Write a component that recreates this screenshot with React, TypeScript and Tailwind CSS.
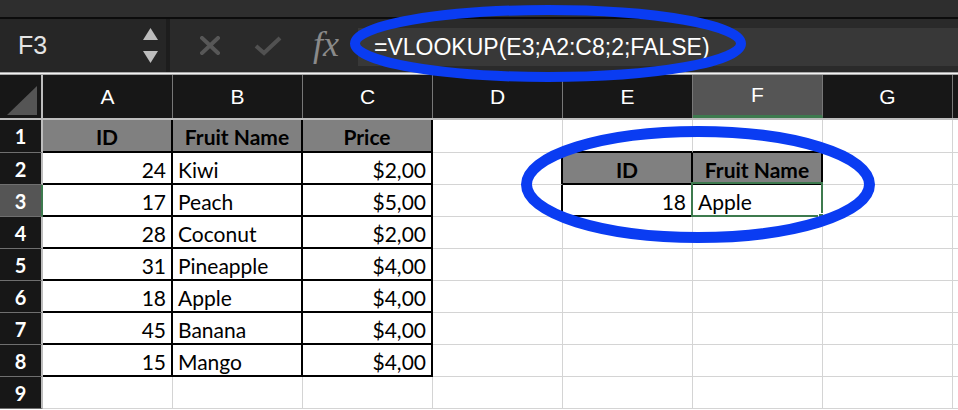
import React from "react";

type Cell = {
  text?: string;
  align?: "l" | "r" | "c";
  head?: boolean;
  br?: boolean; // black right border
  bb?: boolean; // black bottom border
  sel?: boolean;
};

const fruits: [string, string, string][] = [
  ["24", "Kiwi", "$2,00"],
  ["17", "Peach", "$5,00"],
  ["28", "Coconut", "$2,00"],
  ["31", "Pineapple", "$4,00"],
  ["18", "Apple", "$4,00"],
  ["45", "Banana", "$4,00"],
  ["15", "Mango", "$4,00"],
];

const columns = ["A", "B", "C", "D", "E", "F", "G"];

function buildRows(): Cell[][] {
  const rows: Cell[][] = [];
  rows.push([
    { text: "ID", head: true, align: "c", br: true, bb: true },
    { text: "Fruit Name", head: true, align: "c", br: true, bb: true },
    { text: "Price", head: true, align: "c", br: true, bb: true },
    {},
    { bb: true },
    { bb: true },
    {},
  ]);
  fruits.forEach(([id, name, price], i) => {
    const row: Cell[] = [
      { text: id, align: "r", br: true, bb: true },
      { text: name, align: "l", br: true, bb: true },
      { text: price, align: "r", br: true, bb: true },
    ];
    if (i === 0) {
      row.push({ br: true });
      row.push({ text: "ID", head: true, align: "c", br: true, bb: true });
      row.push({ text: "Fruit Name", head: true, align: "c", br: true, bb: true });
    } else if (i === 1) {
      row.push({ br: true });
      row.push({ text: "18", align: "r", br: true, bb: true });
      row.push({ text: "Apple", align: "l", br: true, bb: true, sel: true });
    } else {
      row.push({}, {}, {});
    }
    row.push({});
    rows.push(row);
  });
  rows.push([{}, {}, {}, {}, {}, {}, {}]);
  return rows;
}

function SheetCell({ cell }: { cell: Cell }) {
  const align =
    cell.align === "r" ? "justify-end" : cell.align === "c" ? "justify-center" : "justify-start";
  return (
    <div
      className={`relative flex w-[130px] shrink-0 items-center px-[5px] pt-[2px] text-[21px] text-black ${align} ${
        cell.head ? "bg-[#808080] font-bold" : "bg-white"
      } ${cell.br ? "border-r-2 border-r-black" : "border-r border-r-[#d4d4d4]"} ${
        cell.bb ? "border-b-2 border-b-black" : "border-b border-b-[#d4d4d4]"
      }`}
    >
      <span className="whitespace-nowrap leading-none">{cell.text}</span>
      {cell.sel && (
        <>
          <div className="pointer-events-none absolute -left-[2px] -top-[3px] -right-[2px] -bottom-[2px] border-2 border-[#3d7a4e]" />
          <div className="absolute -bottom-[5px] -right-[5px] h-[7px] w-[8px] border border-white bg-[#3d7a4e]" />
        </>
      )}
    </div>
  );
}

export default function App() {
  const rows = buildRows();

  return (
    <div className="relative h-[410px] w-[958px] overflow-hidden bg-white font-['Lato',sans-serif]">
      {/* top toolbar strip */}
      <div className="h-[17px] bg-[#2e2e2e]" />
      <div className="h-[2px] bg-[#0c0c0c]" />

      {/* formula bar */}
      <div className="flex h-[53px] bg-[#2a2a2a]">
        <div className="flex w-[166px] shrink-0 items-center justify-between bg-[#262626] pl-[18px] pr-[8px]">
          <span className="font-['Liberation_Sans',sans-serif] text-[25px] text-[#e4e4e4]">F3</span>
          <div className="flex flex-col items-center gap-[11px]">
            <svg width="15" height="12" viewBox="0 0 15 12">
              <path d="M7.5 0 L15 12 L0 12 Z" fill="#bdbdbd" />
            </svg>
            <svg width="15" height="12" viewBox="0 0 15 12">
              <path d="M0 0 L15 0 L7.5 12 Z" fill="#bdbdbd" />
            </svg>
          </div>
        </div>
        <div className="w-[4px] shrink-0 bg-[#1d1d1d]" />
        <div className="flex flex-1 items-center">
          <svg className="ml-[30px]" width="20" height="19" viewBox="0 0 20 19">
            <path d="M2 2 L18 17 M18 2 L2 17" stroke="#575757" strokeWidth="4" strokeLinecap="square" />
          </svg>
          <svg className="ml-[34px]" width="28" height="20" viewBox="0 0 28 20">
            <path d="M2 10 L10 17 L26 2" stroke="#515151" strokeWidth="4" fill="none" />
          </svg>
          <span className="ml-[31px] mb-[4px] w-[30px] font-['Liberation_Serif',serif] text-[36px] italic leading-none text-[#8a8a8a]">
            fx
          </span>
          <div className="ml-[15px] mt-[3px] flex h-[38px] flex-1 items-center bg-[#383838] pl-[16px]">
            <span className="whitespace-nowrap font-['Liberation_Sans',sans-serif] text-[23px] text-white">
              =VLOOKUP(E3;A2:C8;2;FALSE)
            </span>
          </div>
        </div>
      </div>

      {/* separator */}
      <div className="h-[3px] border-y border-y-[#a8a8a8] bg-[#f2f2f2]" />

      {/* column headers */}
      <div className="flex h-[45px] border-b-2 border-b-[#bdbdbd] bg-[#171717]">
        <div className="flex w-[43px] shrink-0 items-end border-r-2 border-r-[#bdbdbd] pb-[3px] pl-[7px]">
          <svg width="30" height="29" viewBox="0 0 30 29">
            <path d="M30 0 L30 29 L0 29 Z" fill="#555555" />
          </svg>
        </div>
        {columns.map((c) => (
          <div
            key={c}
            className={`flex w-[130px] shrink-0 items-center justify-center border-r border-r-[#777777] font-['Liberation_Sans',sans-serif] text-[21px] text-white ${
              c === "F" ? "border-b-[3px] border-b-[#3d7a4e] bg-[#555555]" : ""
            }`}
          >
            {c}
          </div>
        ))}
        <div className="flex-1" />
      </div>

      {/* rows */}
      {rows.map((row, ri) => (
        <div key={ri} className={`flex ${ri === 0 ? "h-[33px]" : "h-[32px]"}`}>
          <div
            className={`flex w-[43px] shrink-0 items-center justify-center border-b border-b-[#6f6f6f] text-[20px] font-bold text-white ${
              ri === 2
                ? "border-r-2 border-r-[#3d7a4e] bg-[#555555]"
                : "border-r-2 border-r-[#bdbdbd] bg-[#171717]"
            }`}
          >
            {ri + 1}
          </div>
          {row.map((cell, ci) => (
            <SheetCell key={ci} cell={cell} />
          ))}
          <div className="flex-1 border-b border-b-[#d4d4d4] bg-white" />
        </div>
      ))}

      {/* hand-drawn highlight ellipses */}
      <svg
        className="pointer-events-none absolute left-0 top-0"
        width="958"
        height="410"
        viewBox="0 0 958 410"
      >
        <ellipse cx="548" cy="43.5" rx="193" ry="33.5" fill="none" stroke="#0a3cf2" strokeWidth="10" />
        <ellipse cx="698" cy="184.5" rx="171.5" ry="53" fill="none" stroke="#0a3cf2" strokeWidth="11" />
      </svg>
    </div>
  );
}
